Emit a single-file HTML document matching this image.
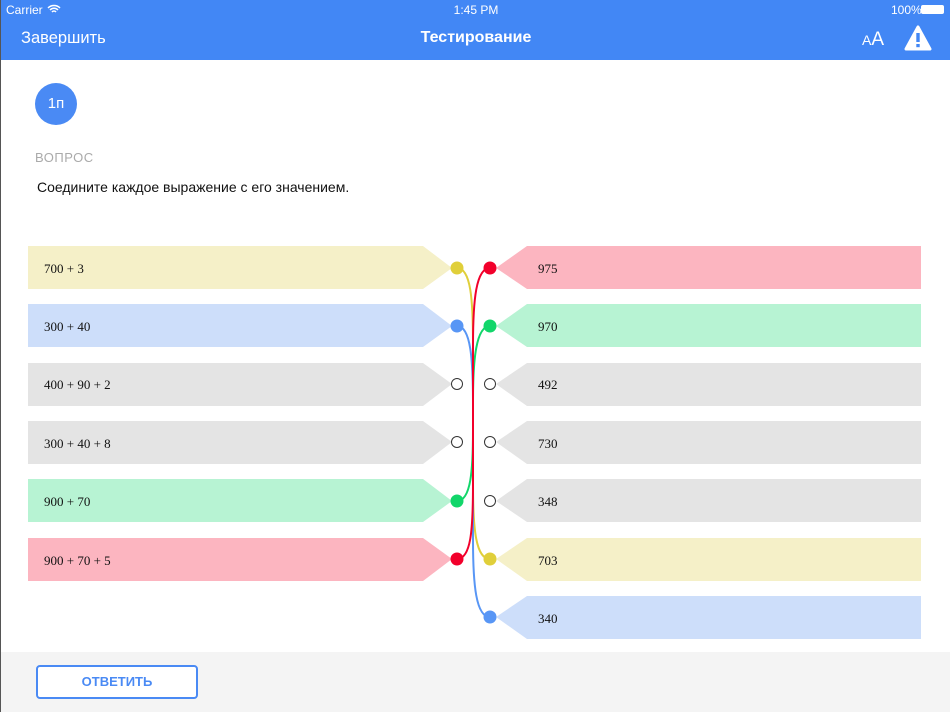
<!DOCTYPE html>
<html><head><meta charset="utf-8"><style>
body{margin:0;width:950px;height:712px;overflow:hidden;background:#fff;font-family:"Liberation Sans",sans-serif;position:relative;border-left:1px solid #555;box-sizing:border-box}
.hdr{position:absolute;left:0;top:0;width:950px;height:60px;background:#4287f5;color:#fff}
.abs{position:absolute}
</style></head><body>
<div class="hdr">
<div class="abs" style="left:5px;top:3px;font-size:12px">Carrier</div>
<svg class="abs" style="left:46px;top:4px" width="14" height="10" viewBox="0 0 14 10"><path d="M1 4a8.5 8.5 0 0 1 12 0M3 6a5.5 5.5 0 0 1 8 0M5 8a2.5 2.5 0 0 1 4 0" stroke="#fff" stroke-width="1.5" fill="none"/></svg>
<div class="abs" style="left:0;width:950px;text-align:center;top:3px;font-size:12px">1:45 PM</div>
<div class="abs" style="left:890px;top:3px;font-size:12px">100%</div>
<div class="abs" style="left:920px;top:5px;width:23px;height:9px;background:#fff;border-radius:2px"></div>
<div class="abs" style="left:20px;top:29px;font-size:16.5px">Завершить</div>
<div class="abs" style="left:0;width:950px;text-align:center;top:29px;font-size:16px;font-weight:bold">Тестирование</div>
<div class="abs" style="left:861px;top:29px;font-size:14px">A<span style="font-size:19px">A</span></div>
<svg class="abs" style="left:903px;top:25px" width="28" height="26" viewBox="0 0 28 26"><path d="M14 2L26 24H2Z" fill="#fff" stroke="#fff" stroke-width="3" stroke-linejoin="round"/><rect x="12.3" y="8" width="3.4" height="9" fill="#4287f5"/><rect x="12.3" y="19" width="3.4" height="3.2" fill="#4287f5"/></svg>
</div>
<div class="abs" style="left:34px;top:83px;width:42px;height:42px;border-radius:50%;background:#4a8af4;color:#fff;font-size:15px;line-height:42px;text-align:center">1п</div>
<div class="abs" style="left:34px;top:150px;font-size:13px;color:#aaa;letter-spacing:0.5px">ВОПРОС</div>
<div class="abs" style="left:36px;top:179px;font-size:14px;color:#111">Соедините каждое выражение с его значением.</div>
<svg class="abs" style="left:-1px;top:0" width="950" height="712">
<g>
<path d="M28 246H423L452 268L423 289H28Z" fill="#f5f0c8"/>
<path d="M28 304H423L452 326L423 347H28Z" fill="#cddefa"/>
<path d="M28 363H423L452 384L423 406H28Z" fill="#e4e4e4"/>
<path d="M28 421H423L452 442L423 464H28Z" fill="#e4e4e4"/>
<path d="M28 479H423L452 501L423 522H28Z" fill="#b7f3d3"/>
<path d="M28 538H423L452 559L423 581H28Z" fill="#fcb5c0"/>
<path d="M921 246H527L496 268L527 289H921Z" fill="#fcb5c0"/>
<path d="M921 304H527L496 326L527 347H921Z" fill="#b7f3d3"/>
<path d="M921 363H527L496 384L527 406H921Z" fill="#e4e4e4"/>
<path d="M921 421H527L496 442L527 464H921Z" fill="#e4e4e4"/>
<path d="M921 479H527L496 501L527 522H921Z" fill="#e4e4e4"/>
<path d="M921 538H527L496 559L527 581H921Z" fill="#f5f0c8"/>
<path d="M921 596H527L496 617L527 639H921Z" fill="#cddefa"/>
</g>
<g fill="none" stroke-width="2">
<path d="M457 268C471 268 473 300 473 345L473 485C473 530 476 559 490 559" stroke="#e0cf3a"/>
<path d="M457 326C471 326 473 360 473 405L473 540C473 585 476 617 490 617" stroke="#5896f5"/>
<path d="M457 501C471 501 473 470 473 430L473 400C473 360 476 326 490 326" stroke="#12d66a"/>
<path d="M457 559C471 559 473 530 473 485L473 345C473 300 476 268 490 268" stroke="#f2002b"/>
</g>
<g>
<circle cx="457" cy="268" r="6.5" fill="#e0cf3a"/><circle cx="457" cy="326" r="6.5" fill="#5896f5"/>
<circle cx="457" cy="384" r="5.5" fill="#fff" stroke="#333"/><circle cx="457" cy="442" r="5.5" fill="#fff" stroke="#333"/>
<circle cx="457" cy="501" r="6.5" fill="#12d66a"/><circle cx="457" cy="559" r="6.5" fill="#f2002b"/>
<circle cx="490" cy="268" r="6.5" fill="#f2002b"/><circle cx="490" cy="326" r="6.5" fill="#12d66a"/>
<circle cx="490" cy="384" r="5.5" fill="#fff" stroke="#333"/><circle cx="490" cy="442" r="5.5" fill="#fff" stroke="#333"/><circle cx="490" cy="501" r="5.5" fill="#fff" stroke="#333"/>
<circle cx="490" cy="559" r="6.5" fill="#e0cf3a"/><circle cx="490" cy="617" r="6.5" fill="#5896f5"/>
</g>
<g font-family="Liberation Serif,serif" font-size="13" fill="#111">
<text x="44" y="273">700 + 3</text><text x="44" y="331">300 + 40</text><text x="44" y="389">400 + 90 + 2</text><text x="44" y="448">300 + 40 + 8</text><text x="44" y="506">900 + 70</text><text x="44" y="565">900 + 70 + 5</text>
<text x="538" y="273">975</text><text x="538" y="331">970</text><text x="538" y="389">492</text><text x="538" y="448">730</text><text x="538" y="506">348</text><text x="538" y="565">703</text><text x="538" y="623">340</text>
</g>
</svg>
<div class="abs" style="left:0;top:652px;width:950px;height:60px;background:#f4f4f4"></div>
<div class="abs" style="left:35px;top:665px;width:158px;height:30px;border:2px solid #4a8af4;border-radius:4px;color:#4a8af4;font-size:13px;font-weight:bold;text-align:center;line-height:30px;background:#fff">ОТВЕТИТЬ</div>
</body></html>
